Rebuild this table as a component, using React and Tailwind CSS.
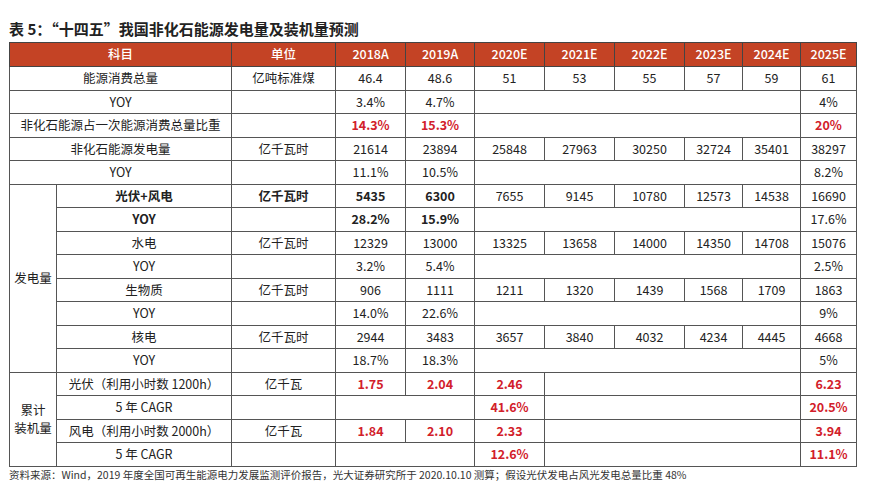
const YEARS = ["2018A", "2019A", "2020E", "2021E", "2022E", "2023E", "2024E", "2025E"];

const td = "border border-[#555] text-center align-middle p-0 whitespace-nowrap";
const red = "text-[#d2202a] font-semibold";

function Row({ children }) {
  return <tr className="h-[23.5px]">{children}</tr>;
}

function Plain({ label, unit, vals, bold, redCls }) {
  return (
    <Row>
      <td colSpan={2} className={`${td} ${bold ? "font-semibold" : ""}`}>{label}</td>
      <td className={td}>{unit}</td>
      {vals.map((v, i) => (
        <td key={i} className={`${td} ${redCls ? red : ""}`}>{v}</td>
      ))}
    </Row>
  );
}

function Yoy({ label = "YOY", a, b, last, span = 2, bold, redCls }) {
  return (
    <Row>
      {span === 2 ? (
        <td colSpan={2} className={`${td} ${bold ? "font-semibold" : ""}`}>{label}</td>
      ) : (
        <td className={`${td} ${bold ? "font-semibold" : ""}`}>{label}</td>
      )}
      <td className={td}></td>
      <td className={`${td} ${redCls ? red : ""} ${bold ? "font-semibold" : ""}`}>{a}</td>
      <td className={`${td} ${redCls ? red : ""} ${bold ? "font-semibold" : ""}`}>{b}</td>
      <td colSpan={5} className={td}></td>
      <td className={`${td} ${redCls ? red : ""}`}>{last}</td>
    </Row>
  );
}

function Sub({ label, unit, vals, bold }) {
  return (
    <>
      <td className={`${td} ${bold ? "font-semibold" : ""}`}>{label}</td>
      <td className={`${td} ${bold ? "font-semibold" : ""}`}>{unit}</td>
      {vals.map((v, i) => (
        <td key={i} className={`${td} ${bold && i < 2 ? "font-semibold" : ""}`}>{v}</td>
      ))}
    </>
  );
}

export default function App() {
  return (
    <div
      className="w-[878px] h-[502px] bg-white text-[#222] overflow-hidden"
      style={{ fontFamily: '"Noto Sans CJK SC", "Noto Sans", sans-serif' }}
    >
      <div className="pl-[9px] pt-[19px] h-[42px] text-[15px] font-bold leading-[20px] text-[#222]">
        表 5：“十四五”我国非化石能源发电量及装机量预测
      </div>
      <table className="ml-[9px] w-[847px] table-fixed border-collapse text-[12.5px] leading-none">
        <colgroup>
          <col className="w-[47px]" />
          <col className="w-[175px]" />
          <col className="w-[104px]" />
          <col className="w-[70px]" />
          <col className="w-[69px]" />
          <col className="w-[70px]" />
          <col className="w-[70px]" />
          <col className="w-[70px]" />
          <col className="w-[58px]" />
          <col className="w-[58px]" />
          <col className="w-[56px]" />
        </colgroup>
        <thead>
          <tr className="h-[24px] bg-[#c44325] text-white">
            <th colSpan={2} className="border border-[#444] font-medium">科目</th>
            <th className="border border-[#444] font-medium">单位</th>
            {YEARS.map((y) => (
              <th key={y} className="border border-[#444] font-medium">{y}</th>
            ))}
          </tr>
        </thead>
        <tbody>
          <Plain label="能源消费总量" unit="亿吨标准煤" vals={["46.4", "48.6", "51", "53", "55", "57", "59", "61"]} />
          <Yoy a="3.4%" b="4.7%" last="4%" />
          <Yoy label="非化石能源占一次能源消费总量比重" a="14.3%" b="15.3%" last="20%" redCls />
          <Plain label="非化石能源发电量" unit="亿千瓦时" vals={["21614", "23894", "25848", "27963", "30250", "32724", "35401", "38297"]} />
          <Yoy a="11.1%" b="10.5%" last="8.2%" />

          <Row>
            <td rowSpan={8} className={td}>发电量</td>
            <Sub label="光伏+风电" unit="亿千瓦时" bold vals={["5435", "6300", "7655", "9145", "10780", "12573", "14538", "16690"]} />
          </Row>
          <Yoy span={1} bold a="28.2%" b="15.9%" last="17.6%" />
          <Row>
            <Sub label="水电" unit="亿千瓦时" vals={["12329", "13000", "13325", "13658", "14000", "14350", "14708", "15076"]} />
          </Row>
          <Yoy span={1} a="3.2%" b="5.4%" last="2.5%" />
          <Row>
            <Sub label="生物质" unit="亿千瓦时" vals={["906", "1111", "1211", "1320", "1439", "1568", "1709", "1863"]} />
          </Row>
          <Yoy span={1} a="14.0%" b="22.6%" last="9%" />
          <Row>
            <Sub label="核电" unit="亿千瓦时" vals={["2944", "3483", "3657", "3840", "4032", "4234", "4445", "4668"]} />
          </Row>
          <Yoy span={1} a="18.7%" b="18.3%" last="5%" />

          <Row>
            <td rowSpan={4} className={`${td} leading-[18px]`}>
              累计
              <br />
              装机量
            </td>
            <td className={td}>光伏（利用小时数 1200h）</td>
            <td className={td}>亿千瓦</td>
            <td className={`${td} ${red}`}>1.75</td>
            <td className={`${td} ${red}`}>2.04</td>
            <td className={`${td} ${red}`}>2.46</td>
            <td colSpan={4} className={td}></td>
            <td className={`${td} ${red}`}>6.23</td>
          </Row>
          <Row>
            <td className={td}>5 年 CAGR</td>
            <td className={td}></td>
            <td colSpan={2} className={td}></td>
            <td className={`${td} ${red}`}>41.6%</td>
            <td colSpan={4} className={td}></td>
            <td className={`${td} ${red}`}>20.5%</td>
          </Row>
          <Row>
            <td className={td}>风电（利用小时数 2000h）</td>
            <td className={td}>亿千瓦</td>
            <td className={`${td} ${red}`}>1.84</td>
            <td className={`${td} ${red}`}>2.10</td>
            <td className={`${td} ${red}`}>2.33</td>
            <td colSpan={4} className={td}></td>
            <td className={`${td} ${red}`}>3.94</td>
          </Row>
          <Row>
            <td className={td}>5 年 CAGR</td>
            <td className={td}></td>
            <td colSpan={2} className={td}></td>
            <td className={`${td} ${red}`}>12.6%</td>
            <td colSpan={4} className={td}></td>
            <td className={`${td} ${red}`}>11.1%</td>
          </Row>
        </tbody>
      </table>
      <div className="pl-[9px] pt-[1px] text-[10.5px] leading-[14px] text-[#333]">
        资料来源：Wind，2019 年度全国可再生能源电力发展监测评价报告，光大证券研究所于 2020.10.10 测算；假设光伏发电占风光发电总量比重 48%
      </div>
    </div>
  );
}
